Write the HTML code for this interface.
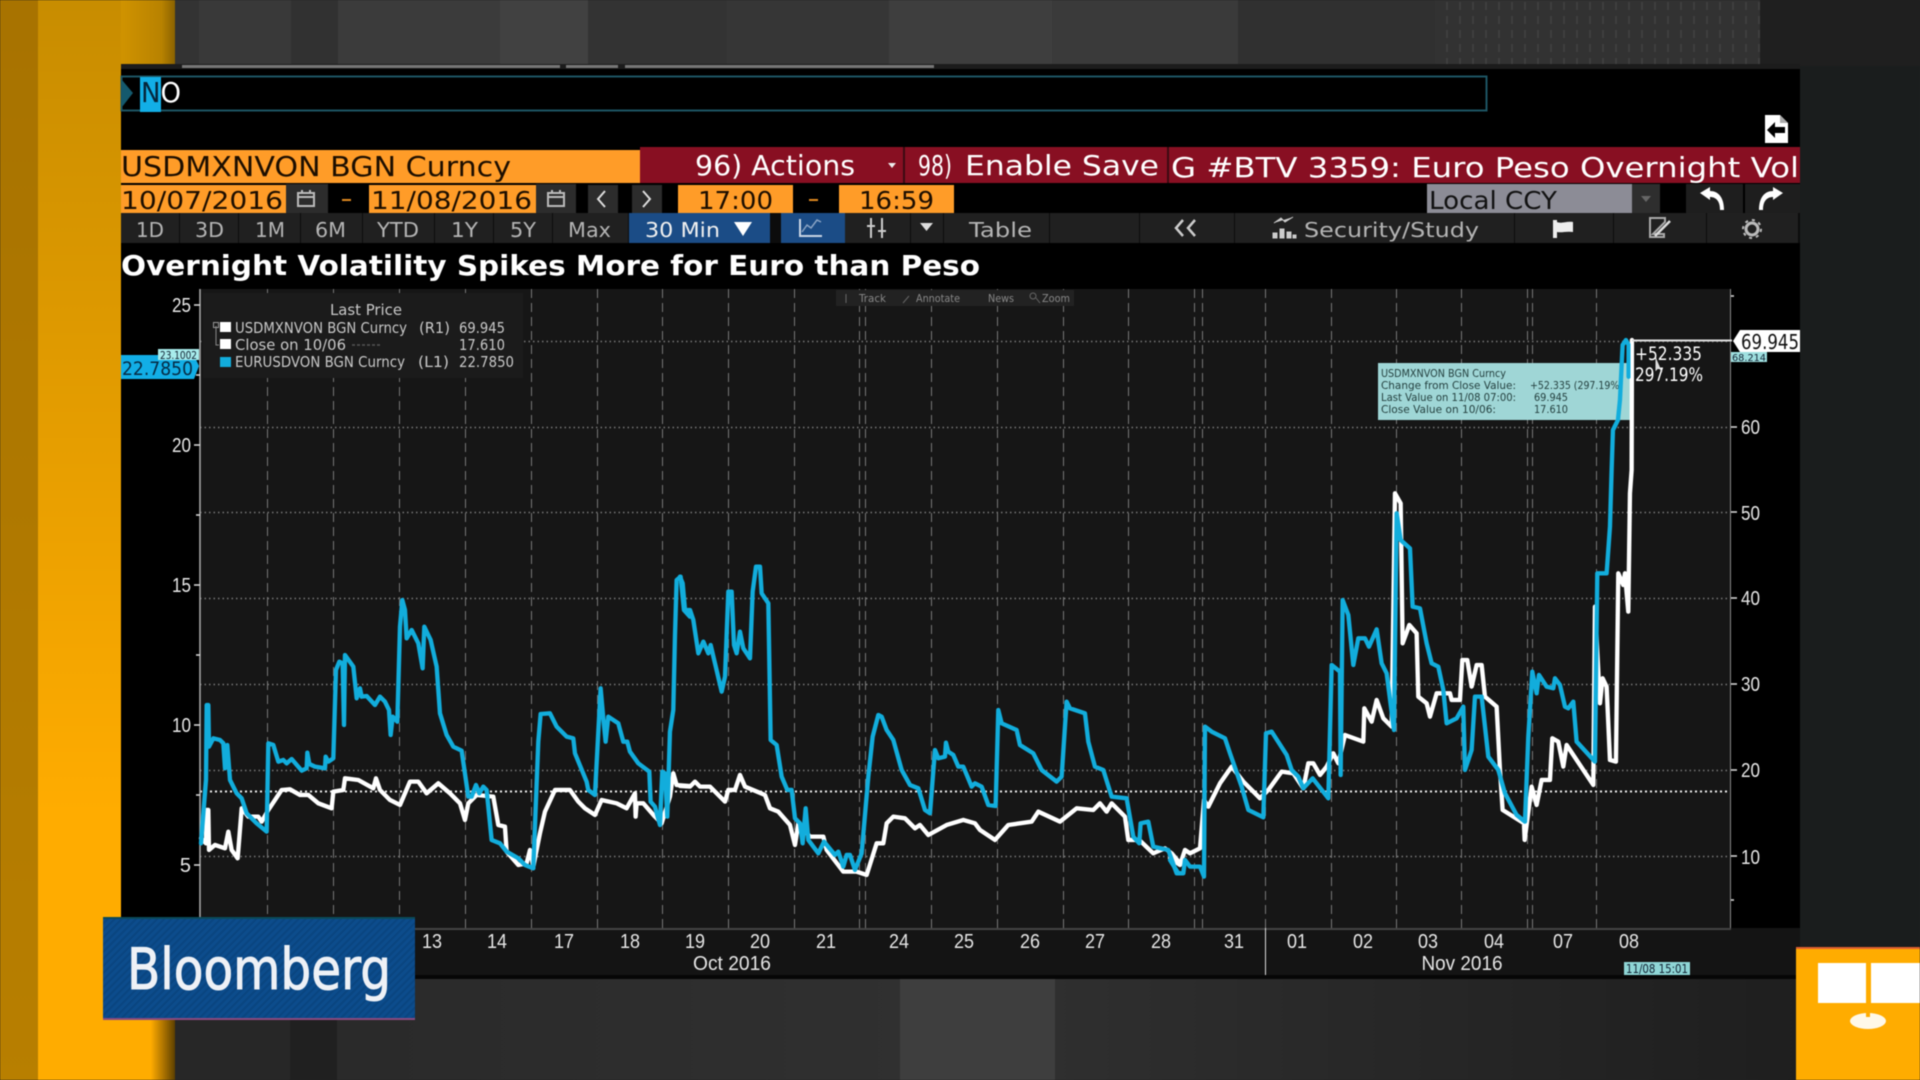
<!DOCTYPE html>
<html><head><meta charset="utf-8"><title>Overnight Volatility Spikes More for Euro than Peso</title>
<style>
html,body{margin:0;padding:0;background:#222;width:1920px;height:1080px;overflow:hidden}
svg{display:block;filter:blur(.4px)}
text{font-family:"DejaVu Sans","Liberation Sans",sans-serif}
.tb{font-size:20px;fill:#b4b4b4}
.ax{font-size:20px;fill:#e6e6e6;font-family:"Liberation Sans",sans-serif}
.lg{font-size:15px;fill:#c8c8c8}
.tt{font-size:11px;fill:#24403f}
.c{fill:none;stroke:#12addc;stroke-width:13;stroke-linejoin:round;stroke-linecap:round}
.w{fill:none;stroke:#fff;stroke-width:13;stroke-linejoin:round;stroke-linecap:round}
</style></head><body>
<svg width="1920" height="1080" viewBox="0 0 1920 1080" xmlns="http://www.w3.org/2000/svg">
<defs>
<linearGradient id="o1" x1="0" y1="0" x2="0" y2="1"><stop offset="0" stop-color="#c88d00"/><stop offset=".75" stop-color="#ffac00"/><stop offset="1" stop-color="#ffac00"/></linearGradient>
<linearGradient id="o2" x1="0" y1="0" x2="0" y2="1"><stop offset="0" stop-color="#a87300"/><stop offset="1" stop-color="#b87f00"/></linearGradient>
<linearGradient id="f1" x1="0" y1="0" x2="1" y2="0"><stop offset="0" stop-color="#d09300"/><stop offset=".75" stop-color="#b88200"/><stop offset="1" stop-color="#8a6200"/></linearGradient>
<linearGradient id="f2" x1="0" y1="0" x2="1" y2="0"><stop offset="0" stop-color="#ffac00"/><stop offset=".55" stop-color="#ffac00"/><stop offset=".8" stop-color="#a87000"/><stop offset="1" stop-color="#5c4000"/></linearGradient>
<linearGradient id="bg3" x1="0" y1="0" x2="1" y2="0"><stop offset="0" stop-color="#2f2f2f"/><stop offset=".25" stop-color="#2a2a2a"/><stop offset="1" stop-color="#1c1c1c"/></linearGradient>
<linearGradient id="bg1" x1="0" y1="0" x2="1" y2="0"><stop offset="0" stop-color="#2a2a2a"/><stop offset="1" stop-color="#303030"/></linearGradient>
<pattern id="dots" width="13" height="14" patternUnits="userSpaceOnUse"><rect x="3" y="2" width="2" height="8" fill="#3f3f3f"/></pattern>
<pattern id="stripe" width="5" height="5" patternUnits="userSpaceOnUse" patternTransform="rotate(-45)"><rect width="5" height="5" fill="#0c4c8c"/><rect width="5" height="2" fill="#0a4580"/></pattern>
<clipPath id="panelclip"><rect x="121" y="140" width="1679" height="50"/></clipPath>
</defs>

<!-- backdrop -->
<rect width="1920" height="1080" fill="#222"/>
<rect x="175" y="0" width="24" height="70" fill="#333"/>
<rect x="199" y="0" width="92" height="70" fill="#393939"/>
<rect x="291" y="0" width="47" height="70" fill="#313131"/>
<rect x="338" y="0" width="162" height="70" fill="#3b3b3b"/>
<rect x="500" y="0" width="88" height="70" fill="#414141"/>
<rect x="588" y="0" width="139" height="70" fill="#333"/>
<rect x="727" y="0" width="162" height="70" fill="#363636"/>
<rect x="889" y="0" width="163" height="70" fill="#3e3e3e"/>
<rect x="1052" y="0" width="186" height="70" fill="#3a3a3a"/>
<rect x="1238" y="0" width="197" height="70" fill="#303030"/>
<rect x="1435" y="0" width="325" height="70" fill="#323232"/>
<rect x="1435" y="0" width="325" height="70" fill="url(#dots)"/>
<rect x="1760" y="0" width="160" height="70" fill="#1f1f1f"/>
<rect x="175" y="975" width="115" height="105" fill="#272727"/>
<rect x="290" y="975" width="47" height="105" fill="#202020"/>
<rect x="337" y="975" width="563" height="105" fill="url(#bg1)"/>
<rect x="900" y="975" width="155" height="105" fill="#3e3e3e"/>
<rect x="1055" y="975" width="865" height="105" fill="url(#bg3)"/>
<rect x="1800" y="66" width="120" height="882" fill="#1a1d1d"/>
<rect x="0" y="0" width="38" height="1080" fill="url(#o2)"/>
<rect x="38" y="0" width="83" height="1080" fill="url(#o1)"/>
<rect x="121" y="0" width="54" height="66" fill="url(#f1)"/>
<rect x="121" y="975" width="54" height="105" fill="url(#f2)"/>

<!-- panel -->
<rect x="121" y="66" width="1679" height="912" fill="#000"/>
<rect x="121" y="64" width="1679" height="5" fill="#1c1c1c"/>
<rect x="182" y="65" width="378" height="3" fill="#777"/>
<rect x="566" y="65" width="52" height="3" fill="#777"/>
<rect x="625" y="65" width="309" height="3" fill="#777"/>

<!-- command line -->
<rect x="121.500" y="76.500" width="1365" height="34" fill="none" stroke="#1d5563" stroke-width="2"/>
<polygon points="122,80 133,93 122,107" fill="#14596d"/>
<rect x="140" y="77" width="21" height="35" fill="#12aee6"/>
<text x="141" y="102" font-size="28" textLength="40" lengthAdjust="spacingAndGlyphs" fill="#fff"><tspan fill="#05253a">N</tspan>O</text>
<!-- page icon -->
<path d="M1765 115H1780L1788 123V143H1765Z" fill="#fff"/>
<path d="M1780 115V123H1788Z" fill="#aaa"/>
<path d="M1767 130L1775 122V127H1785V133H1775V138Z" fill="#000"/>

<!-- row 1 -->
<rect x="121" y="150" width="519" height="33" fill="#ff9c28"/>
<rect x="640" y="147" width="1160" height="36" fill="#880f22"/>
<rect x="903" y="147" width="2" height="36" fill="#3c0a12"/>
<rect x="1167" y="147" width="2" height="36" fill="#3c0a12"/>
<text x="121" y="176" font-size="28" textLength="390" lengthAdjust="spacingAndGlyphs" fill="#1c0e00">USDMXNVON BGN Curncy</text>
<text x="695" y="175" font-size="28" textLength="160" lengthAdjust="spacingAndGlyphs" fill="#fff">96) Actions</text>
<polygon points="888,163 896,163 892,168" fill="#eee"/>
<text x="918" y="175" font-size="28" textLength="34" lengthAdjust="spacingAndGlyphs" fill="#fff">98)</text>
<text x="965" y="175" font-size="28" textLength="194" lengthAdjust="spacingAndGlyphs" fill="#fff">Enable Save</text>
<g clip-path="url(#panelclip)"><text x="1171" y="177" font-size="28" textLength="628" lengthAdjust="spacingAndGlyphs" fill="#fff">G #BTV 3359: Euro Peso Overnight Vol</text></g>

<!-- row 2 -->
<rect x="121" y="185" width="165" height="28" fill="#ff9c28"/>
<rect x="286" y="184" width="42" height="29" fill="#2c2c2c"/>
<rect x="369" y="185" width="167" height="28" fill="#ff9c28"/>
<rect x="536" y="184" width="40" height="29" fill="#2c2c2c"/>
<rect x="588" y="185" width="30" height="28" fill="#2c2c2c"/>
<rect x="632" y="185" width="30" height="28" fill="#2c2c2c"/>
<rect x="678" y="185" width="115" height="28" fill="#ff9c28"/>
<rect x="839" y="185" width="115" height="28" fill="#ff9c28"/>
<g font-size="25" fill="#1c0e00">
<text x="121" y="209" textLength="162" lengthAdjust="spacingAndGlyphs">10/07/2016</text>
<text x="371" y="209" textLength="161" lengthAdjust="spacingAndGlyphs">11/08/2016</text>
<text x="698" y="209" textLength="75" lengthAdjust="spacingAndGlyphs">17:00</text>
<text x="859" y="209" textLength="75" lengthAdjust="spacingAndGlyphs">16:59</text>
</g>
<rect x="342" y="199" width="9" height="2" fill="#e08a20"/>
<rect x="809" y="199" width="9" height="2" fill="#e08a20"/>
<g fill="none" stroke="#bbb" stroke-width="2">
<path d="M298 193H314V206H298Z M298 197H314 M302 190V194 M310 190V194"/>
<path d="M548 193H564V206H548Z M548 197H564 M552 190V194 M560 190V194"/>
<path d="M605 191L598 199L605 207" stroke="#ddd"/>
<path d="M643 191L650 199L643 207" stroke="#ddd"/>
</g>
<rect x="1427" y="184" width="205" height="29" fill="#8c8c96"/>
<rect x="1632" y="184" width="28" height="29" fill="#2e2e2e"/>
<polygon points="1641,196 1651,196 1646,202" fill="#666"/>
<text x="1429" y="209" font-size="25" textLength="128" lengthAdjust="spacingAndGlyphs" fill="#111">Local CCY</text>
<rect x="1686" y="184" width="57" height="29" fill="#1e1e1e"/>
<rect x="1745" y="184" width="55" height="29" fill="#1e1e1e"/>
<path d="M1700 193L1710 187V191C1718 191 1724 197 1724 210H1720C1720 201 1716 197 1710 197V200Z" fill="#fff"/>
<path d="M1783 193L1773 187V191C1765 191 1759 197 1759 210H1763C1763 201 1767 197 1773 197V200Z" fill="#fff"/>

<!-- row 3 toolbar -->
<rect x="121" y="213" width="1679" height="30" fill="#202020"/>
<g fill="#0c0c0c">
<rect x="179" y="213" width="1" height="30"/><rect x="238" y="213" width="1" height="30"/><rect x="300" y="213" width="1" height="30"/><rect x="362" y="213" width="1" height="30"/><rect x="434" y="213" width="1" height="30"/><rect x="493" y="213" width="1" height="30"/><rect x="552" y="213" width="1" height="30"/>
<rect x="628" y="213" width="1" height="30"/><rect x="770" y="213" width="11" height="30"/><rect x="910" y="213" width="1" height="30"/><rect x="943" y="213" width="1" height="30"/><rect x="1049" y="213" width="1" height="30"/><rect x="1139" y="213" width="1" height="30"/><rect x="1234" y="213" width="1" height="30"/><rect x="1514" y="213" width="1" height="30"/><rect x="1613" y="213" width="1" height="30"/><rect x="1706" y="213" width="1" height="30"/><rect x="1798" y="213" width="2" height="30"/>
</g>
<rect x="629" y="213" width="141" height="30" fill="#1b4c86"/>
<rect x="781" y="213" width="64" height="30" fill="#1b4c86"/>
<text class="tb" x="136" y="237" textLength="28" lengthAdjust="spacingAndGlyphs">1D</text>
<text class="tb" x="195" y="237" textLength="29" lengthAdjust="spacingAndGlyphs">3D</text>
<text class="tb" x="255" y="237" textLength="30" lengthAdjust="spacingAndGlyphs">1M</text>
<text class="tb" x="315" y="237" textLength="31" lengthAdjust="spacingAndGlyphs">6M</text>
<text class="tb" x="377" y="237" textLength="42" lengthAdjust="spacingAndGlyphs">YTD</text>
<text class="tb" x="451" y="237" textLength="27" lengthAdjust="spacingAndGlyphs">1Y</text>
<text class="tb" x="510" y="237" textLength="26" lengthAdjust="spacingAndGlyphs">5Y</text>
<text class="tb" x="568" y="237" textLength="43" lengthAdjust="spacingAndGlyphs">Max</text>
<text class="tb" x="645" y="237" textLength="75" lengthAdjust="spacingAndGlyphs" style="fill:#f0f0f0">30 Min</text>
<polygon points="734,222 752,222 743,236" fill="#fff"/>
<path d="M800 219V236H822" fill="none" stroke="#c8d4e4" stroke-width="2"/>
<path d="M802 232L807 225L811 228L817 220L821 222" fill="none" stroke="#8aa4c4" stroke-width="1.500"/>
<path d="M871 218V238 M882 218V238 M867 226H875 M878 231H886" fill="none" stroke="#ccc" stroke-width="2"/>
<polygon points="920,223 933,223 926.500,231" fill="#ddd"/>
<text class="tb" x="969" y="237" textLength="63" lengthAdjust="spacingAndGlyphs">Table</text>
<path d="M1183 220L1176 228L1183 236 M1195 220L1188 228L1195 236" fill="none" stroke="#ccc" stroke-width="2.500"/>
<path d="M1274 223L1281 218L1285 222L1293 217 M1273 238V233H1277V238Z M1280 238V229H1284V238Z M1287 238V232H1291V238Z M1293 238V235H1296V238Z" fill="#ccc" stroke="#ccc" stroke-width="1"/>
<text class="tb" x="1304" y="237" textLength="175" lengthAdjust="spacingAndGlyphs">Security/Study</text>
<path d="M1553 220H1557V222C1562 224 1566 221 1573 222V232C1566 231 1562 233 1557 232V238H1553Z" fill="#eee"/>
<path d="M1650 218H1665V222L1653 234 L1664 234V237H1650Z" fill="none" stroke="#aaa" stroke-width="2"/>
<path d="M1655 236L1670 221" stroke="#ddd" stroke-width="2.500"/>
<g fill="none" stroke="#bbb"><circle cx="1752" cy="229" r="6" stroke-width="3"/><circle cx="1752" cy="229" r="9" stroke-width="2" stroke-dasharray="3 4"/></g>

<!-- title -->
<text x="121" y="275" font-size="28" font-weight="700" textLength="859" lengthAdjust="spacingAndGlyphs" fill="#fff">Overnight Volatility Spikes More for Euro than Peso</text>

<!-- chart -->
<rect x="121" y="289" width="78" height="639" fill="#000"/>
<rect x="199" y="289" width="1532" height="639" fill="#161616"/>
<rect x="121" y="928" width="1679" height="47" fill="#141414"/>
<rect x="1731" y="289" width="69" height="639" fill="#000"/>
<rect x="199" y="928" width="1532" height="2" fill="#444"/>
<rect x="121" y="975" width="1679" height="4" fill="#060606"/>

<!-- grid -->
<g stroke="#777" stroke-width="1.500" stroke-dasharray="1.500 3" fill="none">
<path d="M200 341.500H1731 M200 427.500H1731 M200 512.500H1731 M200 598.500H1731 M200 684.500H1731 M200 770.500H1731 M200 856.500H1731"/>
</g>
<path d="M200 791.500H1731" stroke="#eee" stroke-width="2" stroke-dasharray="2 3" fill="none"/>
<g stroke="#777" stroke-width="1" stroke-dasharray="9 5" fill="none">
<path d="M267.500 289V928 M333.500 289V928 M399.500 289V928 M465.500 289V928 M531.500 289V928 M597.500 289V928 M662.500 289V928 M728.500 289V928 M794.500 289V928 M859.500 289V928 M865.500 289V928 M931.500 289V928 M997.500 289V928 M1063.500 289V928 M1128.500 289V928 M1194.500 289V928 M1202.500 289V928 M1265.500 289V928 M1331.500 289V928 M1396.500 289V928 M1461.500 289V928 M1527.500 289V928 M1532.500 289V928 M1596.500 289V928"/>
</g>
<path d="M200 289V928" stroke="#aaa" stroke-width="1.500" fill="none"/>
<path d="M1730.500 289V928" stroke="#888" stroke-width="1" fill="none"/>
<path d="M1265.500 928V975" stroke="#ddd" stroke-width="1" fill="none"/>

<!-- axis labels -->
<g text-anchor="end">
<text class="ax" x="191" y="312" textLength="19" lengthAdjust="spacingAndGlyphs">25</text><text class="ax" x="191" y="452" textLength="19" lengthAdjust="spacingAndGlyphs">20</text><text class="ax" x="191" y="592" textLength="19" lengthAdjust="spacingAndGlyphs">15</text><text class="ax" x="191" y="732" textLength="19" lengthAdjust="spacingAndGlyphs">10</text><text class="ax" x="191" y="872">5</text>
</g>
<path d="M194 305H200 M194 445H200 M194 585H200 M194 725H200 M194 865H200 M196 375H200 M196 515H200 M196 655H200 M196 795H200" stroke="#ddd" stroke-width="1.500" fill="none"/>
<g>
<text class="ax" x="1741" y="434" textLength="19" lengthAdjust="spacingAndGlyphs">60</text><text class="ax" x="1741" y="520" textLength="19" lengthAdjust="spacingAndGlyphs">50</text><text class="ax" x="1741" y="605" textLength="19" lengthAdjust="spacingAndGlyphs">40</text><text class="ax" x="1741" y="691" textLength="19" lengthAdjust="spacingAndGlyphs">30</text><text class="ax" x="1741" y="777" textLength="19" lengthAdjust="spacingAndGlyphs">20</text><text class="ax" x="1741" y="864" textLength="19" lengthAdjust="spacingAndGlyphs">10</text>
</g>
<path d="M1731 427H1737 M1731 512H1737 M1731 598H1737 M1731 684H1737 M1731 770H1737 M1731 856H1737 M1731 296H1734 M1731 900H1734" stroke="#ddd" stroke-width="1.500" fill="none"/>

<g text-anchor="middle">
<text class="ax" x="432" y="948" textLength="20" lengthAdjust="spacingAndGlyphs">13</text><text class="ax" x="497" y="948" textLength="20" lengthAdjust="spacingAndGlyphs">14</text><text class="ax" x="564" y="948" textLength="20" lengthAdjust="spacingAndGlyphs">17</text><text class="ax" x="630" y="948" textLength="20" lengthAdjust="spacingAndGlyphs">18</text><text class="ax" x="695" y="948" textLength="20" lengthAdjust="spacingAndGlyphs">19</text><text class="ax" x="760" y="948" textLength="20" lengthAdjust="spacingAndGlyphs">20</text><text class="ax" x="826" y="948" textLength="20" lengthAdjust="spacingAndGlyphs">21</text><text class="ax" x="899" y="948" textLength="20" lengthAdjust="spacingAndGlyphs">24</text><text class="ax" x="964" y="948" textLength="20" lengthAdjust="spacingAndGlyphs">25</text><text class="ax" x="1030" y="948" textLength="20" lengthAdjust="spacingAndGlyphs">26</text><text class="ax" x="1095" y="948" textLength="20" lengthAdjust="spacingAndGlyphs">27</text><text class="ax" x="1161" y="948" textLength="20" lengthAdjust="spacingAndGlyphs">28</text><text class="ax" x="1234" y="948" textLength="20" lengthAdjust="spacingAndGlyphs">31</text><text class="ax" x="1297" y="948" textLength="20" lengthAdjust="spacingAndGlyphs">01</text><text class="ax" x="1363" y="948" textLength="20" lengthAdjust="spacingAndGlyphs">02</text><text class="ax" x="1428" y="948" textLength="20" lengthAdjust="spacingAndGlyphs">03</text><text class="ax" x="1494" y="948" textLength="20" lengthAdjust="spacingAndGlyphs">04</text><text class="ax" x="1563" y="948" textLength="20" lengthAdjust="spacingAndGlyphs">07</text><text class="ax" x="1629" y="948" textLength="20" lengthAdjust="spacingAndGlyphs">08</text>
<text class="ax" x="732" y="970" textLength="78" lengthAdjust="spacingAndGlyphs">Oct 2016</text>
<text class="ax" x="1462" y="970" textLength="81" lengthAdjust="spacingAndGlyphs">Nov 2016</text>
</g>
<rect x="1624" y="962" width="66" height="13" fill="#8fd6d6"/>
<text x="1626" y="973" font-size="12" textLength="62" lengthAdjust="spacingAndGlyphs" fill="#123">11/08 15:01</text>

<!-- legend -->
<rect x="203" y="293" width="320" height="85" fill="#1b1b1b"/>
<text class="lg" x="366" y="315" text-anchor="middle" textLength="72" lengthAdjust="spacingAndGlyphs">Last Price</text>
<path d="M216 326V345H219" fill="none" stroke="#888" stroke-width="1"/>
<rect x="213.500" y="322.500" width="5" height="5" fill="none" stroke="#999"/>
<rect x="220" y="322" width="11" height="10" fill="#fff"/>
<rect x="220" y="339" width="11" height="10" fill="#fff"/>
<rect x="220" y="357" width="11" height="10" fill="#12addc"/>
<text class="lg" x="235" y="333" textLength="172" lengthAdjust="spacingAndGlyphs">USDMXNVON BGN Curncy</text>
<text class="lg" x="419" y="333" textLength="31" lengthAdjust="spacingAndGlyphs">(R1)</text>
<text class="lg" x="459" y="333" textLength="46" lengthAdjust="spacingAndGlyphs">69.945</text>
<text class="lg" x="235" y="350" textLength="111" lengthAdjust="spacingAndGlyphs">Close on 10/06</text>
<path d="M352 345H381" stroke="#555" stroke-width="1.500" stroke-dasharray="3 2"/>
<text class="lg" x="459" y="350" textLength="46" lengthAdjust="spacingAndGlyphs">17.610</text>
<text class="lg" x="235" y="367" textLength="170" lengthAdjust="spacingAndGlyphs">EURUSDVON BGN Curncy</text>
<text class="lg" x="418" y="367" textLength="31" lengthAdjust="spacingAndGlyphs">(L1)</text>
<text class="lg" x="459" y="367" textLength="55" lengthAdjust="spacingAndGlyphs">22.7850</text>

<!-- left tag -->
<polygon points="121,355 194,355 199,366 194,379 121,379" fill="#12aee6"/>
<rect x="158" y="349" width="41" height="11" fill="#a8ecec"/>
<text x="160" y="359" font-size="11" textLength="37" lengthAdjust="spacingAndGlyphs" fill="#123">23.1002</text>
<text x="122" y="375" font-size="19" textLength="71" lengthAdjust="spacingAndGlyphs" fill="#062b44">22.7850</text>

<!-- mini chart toolbar -->
<rect x="836" y="290" width="238" height="16" fill="#222"/>
<g font-size="11" fill="#888">
<text x="859" y="302" textLength="27" lengthAdjust="spacingAndGlyphs">Track</text>
<text x="916" y="302" textLength="44" lengthAdjust="spacingAndGlyphs">Annotate</text>
<text x="988" y="302" textLength="26" lengthAdjust="spacingAndGlyphs">News</text>
<text x="1042" y="302" textLength="28" lengthAdjust="spacingAndGlyphs">Zoom</text>
</g>
<path d="M846 294V303 M903 303L909 296 M1036 298L1040 303" stroke="#666" stroke-width="1" fill="none"/>
<circle cx="1033" cy="296" r="3" stroke="#666" fill="none"/>

<!-- tooltip -->
<rect x="1378" y="363" width="254" height="57" fill="#9fd6d6"/>
<text class="tt" x="1381" y="377" textLength="125" lengthAdjust="spacingAndGlyphs">USDMXNVON BGN Curncy</text>
<text class="tt" x="1381" y="389" textLength="135" lengthAdjust="spacingAndGlyphs">Change from Close Value:</text>
<text class="tt" x="1530" y="389" textLength="93" lengthAdjust="spacingAndGlyphs">+52.335 (297.19%)</text>
<text class="tt" x="1381" y="401" textLength="135" lengthAdjust="spacingAndGlyphs">Last Value on 11/08 07:00:</text>
<text class="tt" x="1534" y="401" textLength="34" lengthAdjust="spacingAndGlyphs">69.945</text>
<text class="tt" x="1381" y="413" textLength="115" lengthAdjust="spacingAndGlyphs">Close Value on 10/06:</text>
<text class="tt" x="1534" y="413" textLength="34" lengthAdjust="spacingAndGlyphs">17.610</text>

<!-- white series -->
<polyline class="w" transform="translate(190,560) scale(.3333)" points="33,835 48,850 50,750 55,750 57,870 75,855 105,865 115,815 125,870 143,895 155,745 175,770 205,770 215,785 235,750 265,705 275,690 300,688 330,705 355,705 385,730 425,745 430,695 460,690 465,655 505,660 550,685 558,655 570,690 600,720 630,735 660,665 685,665 710,700 745,670 780,700 810,730 825,780 835,730 860,705 910,710 925,795 945,800 950,875 985,915 1010,910 1020,870 1030,920 1050,820 1065,755 1095,690 1140,690 1165,725 1185,745 1215,765 1235,720 1280,730 1310,745 1335,700 1337,770 1340,730 1360,730 1395,770 1415,790 1440,710 1450,640 1460,675 1500,678"/>
<polyline class="w" transform="translate(680,560) scale(.3333)" points="0,678 30,680 45,665 60,680 90,680 135,725 145,690 165,690 180,645 195,680 255,705 270,745 295,755 330,795 345,855 355,790 390,830 430,830 440,870 490,935 530,935 560,945 590,850 610,850 620,790 640,770 675,775 705,805 720,795 745,825 800,795 850,780 885,790 900,810 945,840 985,795 1055,785 1075,755 1140,785 1190,745 1240,750 1260,730 1280,755 1295,730 1335,770 1345,840 1378,840 1420,880 1455,865 1475,880 1500,910"/>
<polyline class="w" transform="translate(1170,470) scale(.3333)" points="0,1165 30,1185 45,1140 60,1150 90,1135 102,990 115,1010 150,940 185,890 220,935 270,985 295,960 335,905 370,910 400,955 415,880 430,880 450,915 470,890 490,850 505,880 525,795 580,815 583,715 605,755 620,690 640,745 665,770 675,70 692,100 698,520 718,465 740,490 745,680 770,700 780,740 800,670 840,670 845,690 870,690 877,570 892,570 905,650 920,585 935,585 945,680 980,710 990,900 998,1020 1062,1060 1064,1110 1085,950 1100,1005 1115,930 1140,930 1147,805 1165,815 1180,890 1190,825 1270,945 1275,410 1290,700 1298,625 1310,650 1320,870 1338,875 1345,310 1360,345 1365,310 1375,425 1380,70 1385,0 1386,-390"/>

<!-- cyan series -->
<polyline class="c" transform="translate(190,560) scale(.3333)" points="33,850 48,660 50,435 55,435 57,560 70,535 90,540 100,550 105,625 112,555 120,660 140,700 155,715 170,760 200,790 230,815 235,550 250,555 265,605 280,600 290,610 305,597 335,632 350,625 352,578 358,612 375,620 405,625 407,590 415,605 430,595 438,330 448,305 458,310 462,495 465,285 490,320 500,415 510,385 515,410 530,408 555,435 570,410 585,425 597,450 602,525 608,470 622,485 630,200 637,120 645,150 650,235 665,210 685,250 698,325 703,200 722,240 740,320 750,460 770,525 790,560 815,572 835,710 845,710 858,675 868,700 880,680 890,690 905,840 930,850 950,875 985,895 1005,915 1030,925 1045,545 1052,462 1080,460 1100,500 1130,530 1150,535 1155,580 1190,665 1195,690 1215,705 1232,385 1240,475 1247,545 1255,470 1285,490 1300,545 1312,545 1320,575 1345,610 1378,635 1382,725 1395,740 1410,795 1417,635 1425,640 1432,770 1440,515 1450,450 1455,230 1460,60 1472,50 1482,150 1500,170"/>
<polyline class="c" transform="translate(680,560) scale(.3333)" points="0,50 8,70 15,150 30,150 40,180 55,280 70,245 85,280 92,255 105,310 125,395 135,350 145,95 155,95 162,255 170,280 180,215 190,265 210,295 218,95 228,20 240,20 245,100 265,130 272,540 290,555 305,650 322,690 335,690 345,775 360,790 368,850 377,745 385,840 415,880 432,845 465,885 475,875 490,920 500,885 510,885 525,930 545,880 565,650 578,530 595,465 605,470 620,510 640,540 665,630 690,675 715,685 735,750 750,760 765,570 775,595 795,590 798,548 805,575 820,585 835,620 850,620 875,680 885,670 905,680 925,735 947,738 955,450 965,490 1010,510 1020,555 1060,580 1085,630 1130,665 1145,650 1160,425 1170,445 1215,460 1225,545 1245,620 1270,630 1295,710 1340,715 1360,830 1378,850 1382,790 1405,785 1420,860 1465,870 1490,940 1500,940"/>
<polyline class="c" transform="translate(1170,470) scale(.3333)" points="0,1170 25,1210 40,1210 45,1170 60,1190 90,1190 102,1220 105,770 125,785 165,805 180,850 215,950 235,1020 280,1042 288,790 305,785 350,855 365,900 385,920 400,955 428,925 475,985 485,585 510,605 512,915 518,390 535,435 550,585 565,505 585,505 597,530 620,478 635,580 650,610 672,780 680,130 692,210 720,235 728,410 750,415 770,520 785,580 805,590 820,660 830,760 860,745 880,710 885,900 905,840 915,680 935,680 955,860 985,900 1005,970 1040,1035 1065,1055 1075,800 1087,605 1100,670 1107,615 1130,650 1150,655 1155,625 1170,645 1185,710 1195,715 1210,695 1220,815 1275,875 1282,310 1310,310 1320,170 1325,0 1329,-120 1344,-150 1350,-210 1358,-375 1368,-390 1376,-375 1376,-280"/>
<path d="M1632 340V470" stroke="#fff" stroke-width="3" fill="none"/>

<!-- value box -->
<path d="M1632 340.500H1732" stroke="#ddd" stroke-width="2" fill="none"/>
<polygon points="1733,341 1740,330 1800,330 1800,352 1740,352" fill="#fff"/>
<text x="1741" y="349" font-size="20" textLength="58" lengthAdjust="spacingAndGlyphs" fill="#111">69.945</text>
<rect x="1731" y="352" width="36" height="10" fill="#9fe0e0"/>
<text x="1732" y="361" font-size="10" textLength="34" lengthAdjust="spacingAndGlyphs" fill="#123">68.214</text>
<text x="1635" y="360" font-size="19" textLength="67" lengthAdjust="spacingAndGlyphs" fill="#fff">+52.335</text>
<text x="1635" y="381" font-size="19" textLength="68" lengthAdjust="spacingAndGlyphs" fill="#fff">297.19%</text>
<path d="M1656 358V370L1659 367L1662 372" stroke="#ddd" fill="#ddd" stroke-width="1"/>

<!-- Bloomberg bug -->
<rect x="103" y="918" width="312" height="101" fill="url(#stripe)"/>
<rect x="103" y="917" width="312" height="2" fill="#0a4a5a"/>
<rect x="103" y="1018" width="312" height="2" fill="#8a4a80"/>
<text x="127" y="989" font-size="57" textLength="264" lengthAdjust="spacingAndGlyphs" fill="#eef1f6" stroke="#eef1f6" stroke-width="1">Bloomberg</text>

<!-- corner box -->
<rect x="1796" y="948" width="124" height="132" fill="#ffac00"/>
<rect x="1796" y="947" width="124" height="2" fill="#e06030"/>
<rect x="1818" y="963" width="48" height="40" fill="#fff"/>
<rect x="1871" y="963" width="49" height="40" fill="#fff"/>
<ellipse cx="1868" cy="1021" rx="18" ry="8" fill="#fff8e8"/>
<rect x="1866" y="1012" width="4" height="5" fill="#ffac00"/>
</svg>
</body></html>
